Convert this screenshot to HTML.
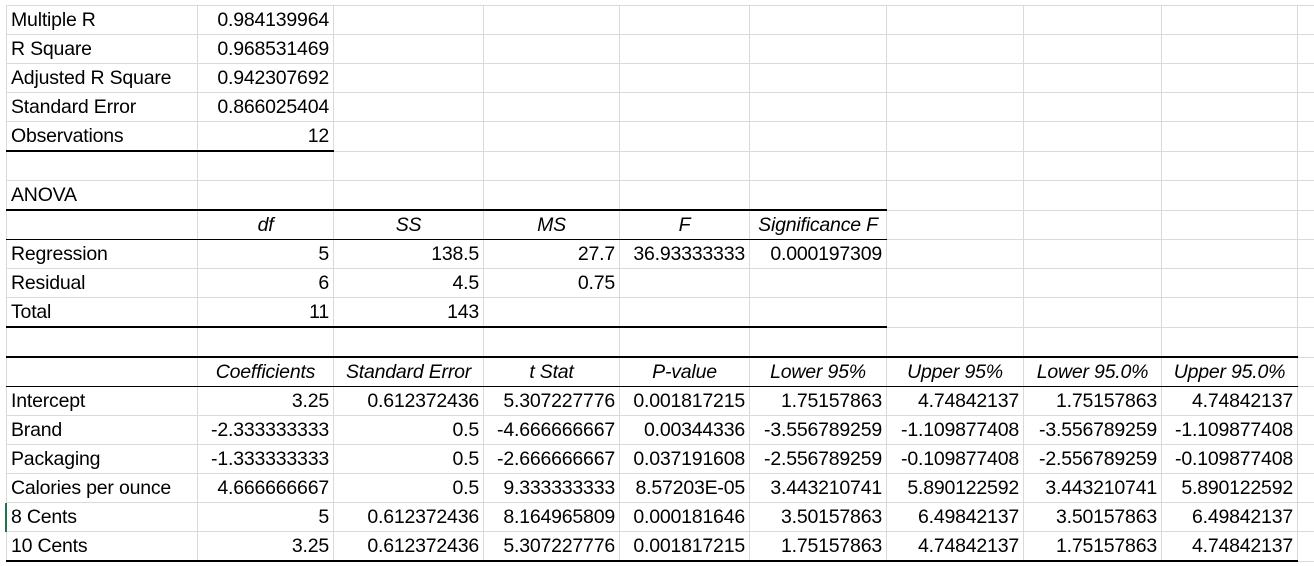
<!DOCTYPE html>
<html><head><meta charset="utf-8"><style>
html,body{margin:0;padding:0;background:#fff;width:1314px;height:566px;overflow:hidden}
table{position:absolute;left:6px;top:5px;width:1321px;border-collapse:collapse;table-layout:fixed;font-family:"Liberation Sans",sans-serif;font-size:19.5px;color:#000}
td{height:28px;padding:0 4px;border:1px solid #dadada;white-space:nowrap;overflow:hidden;text-align:right;line-height:20px;letter-spacing:-0.2px}
td.l{text-align:left}
td.c{text-align:center;font-style:italic}
.tb td{border-bottom:2px solid #000}
.bt td{border-bottom:1px solid #000}
tr.tb td.x,tr.bt td.x{border-bottom:1px solid #dadada}
#mark{position:absolute;left:5px;top:503px;width:2px;height:29px;background:#217346}
</style></head><body>
<table>
<colgroup><col style="width:191px"><col style="width:136px"><col style="width:150px"><col style="width:136px"><col style="width:130px"><col style="width:137px"><col style="width:137px"><col style="width:138px"><col style="width:136px"><col style="width:30px"></colgroup>
<tr><td class="l">Multiple R</td><td>0.984139964</td><td></td><td></td><td></td><td></td><td></td><td></td><td></td><td></td></tr>
<tr><td class="l">R Square</td><td>0.968531469</td><td></td><td></td><td></td><td></td><td></td><td></td><td></td><td></td></tr>
<tr><td class="l">Adjusted R Square</td><td>0.942307692</td><td></td><td></td><td></td><td></td><td></td><td></td><td></td><td></td></tr>
<tr><td class="l">Standard Error</td><td>0.866025404</td><td></td><td></td><td></td><td></td><td></td><td></td><td></td><td></td></tr>
<tr class="tb"><td class="l">Observations</td><td>12</td><td class="x"></td><td class="x"></td><td class="x"></td><td class="x"></td><td class="x"></td><td class="x"></td><td class="x"></td><td class="x"></td></tr>
<tr><td></td><td></td><td></td><td></td><td></td><td></td><td></td><td></td><td></td><td></td></tr>
<tr class="tb"><td class="l">ANOVA</td><td></td><td></td><td></td><td></td><td></td><td class="x"></td><td class="x"></td><td class="x"></td><td class="x"></td></tr>
<tr class="bt"><td></td><td class="c">df</td><td class="c">SS</td><td class="c">MS</td><td class="c">F</td><td class="c">Significance F</td><td class="x"></td><td class="x"></td><td class="x"></td><td class="x"></td></tr>
<tr><td class="l">Regression</td><td>5</td><td>138.5</td><td>27.7</td><td>36.93333333</td><td>0.000197309</td><td></td><td></td><td></td><td></td></tr>
<tr><td class="l">Residual</td><td>6</td><td>4.5</td><td>0.75</td><td></td><td></td><td></td><td></td><td></td><td></td></tr>
<tr class="tb"><td class="l">Total</td><td>11</td><td>143</td><td></td><td></td><td></td><td class="x"></td><td class="x"></td><td class="x"></td><td class="x"></td></tr>
<tr class="tb"><td></td><td></td><td></td><td></td><td></td><td></td><td></td><td></td><td></td><td class="x"></td></tr>
<tr class="bt"><td></td><td class="c">Coefficients</td><td class="c">Standard Error</td><td class="c">t Stat</td><td class="c">P-value</td><td class="c">Lower 95%</td><td class="c">Upper 95%</td><td class="c">Lower 95.0%</td><td class="c">Upper 95.0%</td><td class="x"></td></tr>
<tr><td class="l">Intercept</td><td>3.25</td><td>0.612372436</td><td>5.307227776</td><td>0.001817215</td><td>1.75157863</td><td>4.74842137</td><td>1.75157863</td><td>4.74842137</td><td></td></tr>
<tr><td class="l">Brand</td><td>-2.333333333</td><td>0.5</td><td>-4.666666667</td><td>0.00344336</td><td>-3.556789259</td><td>-1.109877408</td><td>-3.556789259</td><td>-1.109877408</td><td></td></tr>
<tr><td class="l">Packaging</td><td>-1.333333333</td><td>0.5</td><td>-2.666666667</td><td>0.037191608</td><td>-2.556789259</td><td>-0.109877408</td><td>-2.556789259</td><td>-0.109877408</td><td></td></tr>
<tr><td class="l">Calories per ounce</td><td>4.666666667</td><td>0.5</td><td>9.333333333</td><td>8.57203E-05</td><td>3.443210741</td><td>5.890122592</td><td>3.443210741</td><td>5.890122592</td><td></td></tr>
<tr><td class="l">8 Cents</td><td>5</td><td>0.612372436</td><td>8.164965809</td><td>0.000181646</td><td>3.50157863</td><td>6.49842137</td><td>3.50157863</td><td>6.49842137</td><td></td></tr>
<tr class="tb"><td class="l">10 Cents</td><td>3.25</td><td>0.612372436</td><td>5.307227776</td><td>0.001817215</td><td>1.75157863</td><td>4.74842137</td><td>1.75157863</td><td>4.74842137</td><td class="x"></td></tr>
</table>
<div id="mark"></div>
</body></html>
